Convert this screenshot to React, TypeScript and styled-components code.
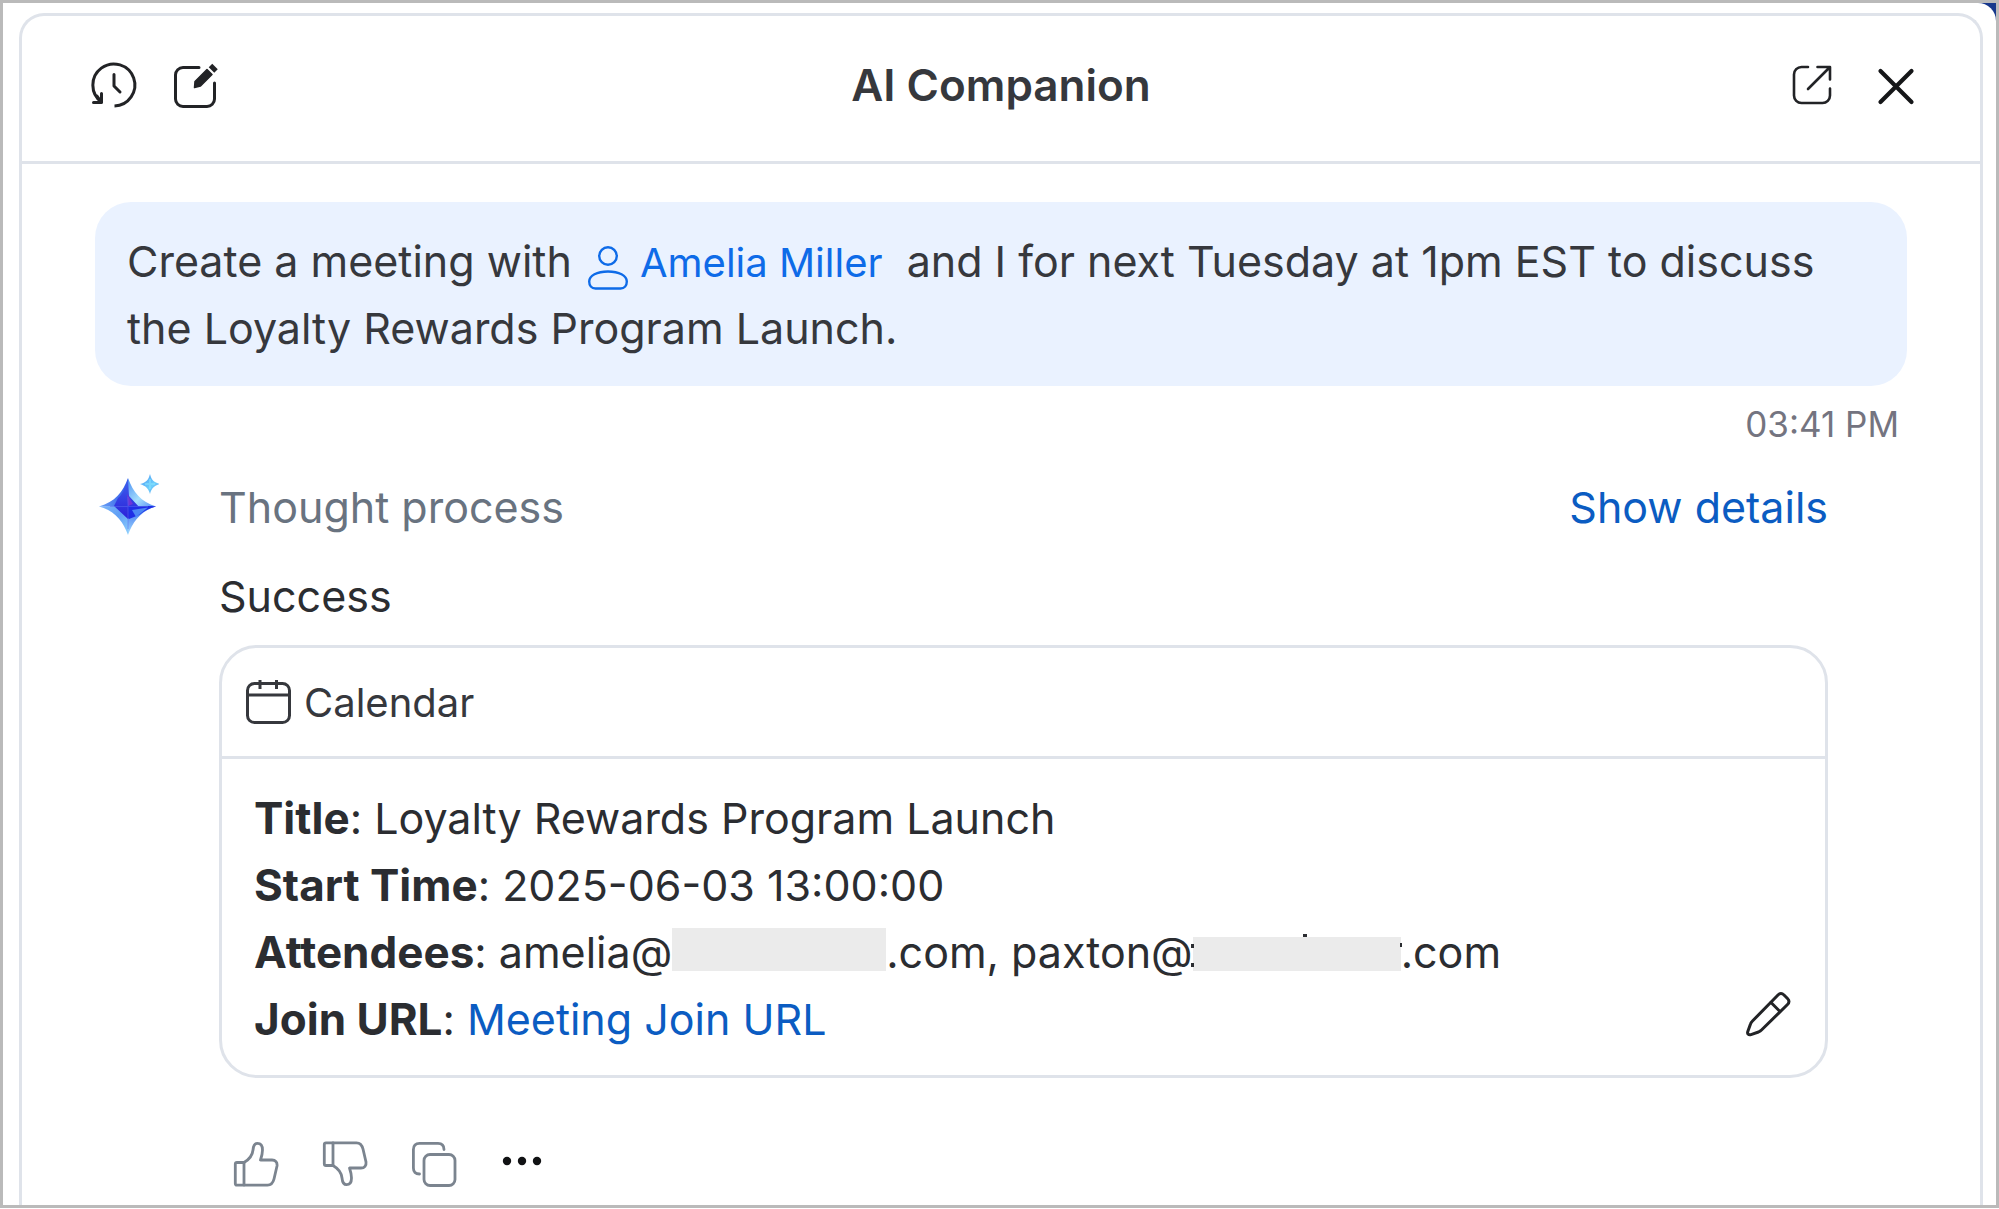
import React from "react";
import styled, { createGlobalStyle } from "styled-components";

const ink = "#2b2d31";
const line = "#dfe3ea";
const link = "#0b5cc2";

const GlobalStyle = createGlobalStyle`
  *, *::before, *::after { box-sizing: border-box; }
  body {
    margin: 0;
    background: #fff;
    font-family: Inter, "Liberation Sans", sans-serif;
    -webkit-font-smoothing: antialiased;
  }
`;

const Frame = styled.div`
  height: 100vh;
  padding-bottom: 1px;
  display: flex;
  overflow: hidden;
`;

const Backdrop = styled.div`
  flex: 1;
  display: flex;
  border: 3px solid #bababa;
  background: #17388c;
  overflow: hidden;
`;

const Surface = styled.div`
  flex: 1;
  display: flex;
  padding: 10px 13px 0 16px;
  border-top-right-radius: 18px;
  background: #fff;
`;

const Panel = styled.main`
  flex: 1;
  min-width: 0;
  border: 3px solid ${line};
  border-bottom: 0;
  border-radius: 25px 25px 0 0;
`;

const Header = styled.header`
  height: 148px;
  padding: 0 56px 7px;
  display: grid;
  grid-template-columns: 1fr auto 1fr;
  align-items: center;
  border-bottom: 3px solid ${line};
`;

const HeaderTools = styled.div<{ $end?: boolean }>`
  display: flex;
  gap: ${(p) => (p.$end ? 28 : 26)}px;
  padding-left: ${(p) => (p.$end ? 0 : 8)}px;
  justify-content: ${(p) => (p.$end ? "flex-end" : "flex-start")};
`;

const IconButton = styled.button<{ $width?: number; $color?: string }>`
  width: ${(p) => p.$width ?? 44}px;
  height: 44px;
  padding: 0;
  border: 0;
  display: flex;
  align-items: center;
  justify-content: center;
  background: none;
  color: ${(p) => p.$color ?? "#222326"};
  cursor: pointer;
`;

const Icon = styled.svg`
  display: block;
  width: 44px;
  height: 44px;
  flex: none;
  overflow: visible;
  fill: none;
  stroke: currentColor;
  stroke-width: 3;
  stroke-linecap: round;
  stroke-linejoin: round;
`;

const Title = styled.h1`
  margin: 0;
  font-size: 44px;
  line-height: 56px;
  font-weight: 600;
  color: #36383d;
`;

const Conversation = styled.section`
  padding: 38px 73px 0;
`;

const Bubble = styled.div`
  padding: 26px 32px 24px;
  border-radius: 36px;
  background: #eaf2ff;
  color: #36383d;
  font-size: 43px;
  line-height: 67px;
`;

const Mention = styled.a`
  margin-right: 12px;
  color: #0e6be8;
  font-size: 40px;
  line-height: 1;
  text-decoration: none;

  svg {
    display: inline-block;
    vertical-align: -13px;
    width: 40px;
    margin: 0 12px 0 4px;
  }
`;

const Time = styled.time`
  display: block;
  padding: 14px 8px 0;
  font-size: 35px;
  line-height: 48px;
  text-align: right;
  color: #747480;
`;

const Reply = styled.article`
  display: grid;
  grid-template-columns: 124px 1fr;
  padding: 26px 79px 0 0;
`;

const Spark = styled.svg`
  display: block;
  width: 64px;
  height: 64px;
`;

const ReplyBody = styled.div`
  min-width: 0;
  font-size: 43px;
  line-height: 67px;
  color: ${ink};
`;

const ThoughtRow = styled.div`
  display: flex;
  justify-content: space-between;
  color: #697380;
`;

const TextButton = styled.button`
  padding: 0;
  border: 0;
  background: none;
  font: inherit;
  color: ${link};
  cursor: pointer;
`;

const Status = styled.p`
  margin: 22px 0 15px;
`;

const Card = styled.section`
  border: 3px solid ${line};
  border-radius: 38px;
`;

const CardHeader = styled.h2`
  margin: 0;
  height: 111px;
  padding: 0 24px;
  display: flex;
  align-items: center;
  gap: 14px;
  border-bottom: 3px solid ${line};
  font-size: 40px;
  font-weight: 400;
  color: #36383d;
`;

const CardBody = styled.div`
  padding: 26px 35px 22px 32px;
  display: flex;
  align-items: flex-end;
  justify-content: space-between;
`;

const Details = styled.dl`
  margin: 0;
`;

const Detail = styled.div`
  display: flex;
  white-space: pre;
`;

const Term = styled.dt`
  strong {
    font-size: 44px;
    line-height: 1;
    font-weight: 700;
  }
`;

const Value = styled.dd`
  margin: 0;
  display: flex;
`;

const Redacted = styled.span<{ $width: number; $height: number }>`
  width: ${(p) => p.$width}px;
  height: ${(p) => p.$height}px;
  margin-top: ${(p) => 52 - p.$height}px;
  background: #ebebeb;

  svg {
    display: block;
    overflow: visible;
  }
`;

const Link = styled.a`
  color: ${link};
  text-decoration: none;
`;

const EditSlot = styled.div`
  padding-bottom: 17px;
`;

const Actions = styled.div`
  display: flex;
  gap: 45px;
  padding: 64px 15px 0;
`;

const HistoryIcon = () => (
  <Icon viewBox="0 0 44 44" aria-hidden="true">
    <path d="M22.5 43A21 21 0 1 0 9.5 39" strokeLinecap="butt" />
    <path d="M1.5 39.5H9.5V30.5M9.5 39.5L5 33" />
    <path d="M22 11.500V23L28 29" />
  </Icon>
);

const ComposeIcon = () => (
  <Icon viewBox="0 0 44 44" aria-hidden="true">
    <path d="M25 4.500H9A7.500 7.500 0 0 0 1.500 12V36A7.500 7.500 0 0 0 9 43.500H33A7.500 7.500 0 0 0 40.500 36V20" />
    <path d="M21 18.500L33 6.500L38 11.500L26.500 23L20.500 24.500Z" fill="currentColor" strokeWidth="1.500" />
    <path d="M36.500 2.500L42 8" strokeWidth="5" strokeLinecap="butt" />
  </Icon>
);

const PopOutIcon = () => (
  <Icon viewBox="0 0 44 44" aria-hidden="true">
    <g strokeWidth="2.600">
      <path d="M18 4H11.500A7.500 7.500 0 0 0 4 11.500V32.500A7.500 7.500 0 0 0 11.500 40H32.500A7.500 7.500 0 0 0 40 32.500V25.500" />
      <path d="M27.500 4H40V16.500M39.500 4.500L18 26" />
    </g>
  </Icon>
);

const CloseIcon = () => (
  <Icon viewBox="0 0 44 44" aria-hidden="true">
    <path d="M6.500 8L37.500 39M37.500 8L6.500 39" strokeWidth="4.200" stroke="#151618" />
  </Icon>
);

const PersonIcon = () => (
  <svg viewBox="0 0 40 44" height="44" fill="none" stroke="currentColor" strokeWidth="2.400" aria-hidden="true">
    <circle cx="20" cy="10" r="8.800" />
    <path d="M7.500 42.500C3.500 42.500 1.200 39.500 1.200 35.500C1.200 29.500 9 25.500 20 25.500S38.800 29.500 38.800 35.500C38.800 39.500 36.500 42.500 32.500 42.500Z" />
  </svg>
);

const CalendarIcon = () => (
  <Icon viewBox="0 0 44 44" aria-hidden="true">
    <rect x="1.500" y="3.500" width="42" height="39" rx="7" />
    <path d="M2 15H43M14 0V9M30.500 0V9" strokeLinecap="butt" />
  </Icon>
);

const PencilIcon = () => (
  <Icon viewBox="0 0 44 44" aria-hidden="true">
    <path d="M1.800 39.500L4.500 32C5 30.500 5.500 30 6.500 29L32 3C34 1 36 1 38 3L41.500 6.500C43.500 8.500 43.500 10.500 41.500 12.500L15.500 38C14.500 39 13.500 39.500 12.500 40L5 42.600C2.500 43.200 1 42 1.800 39.500Z" />
    <path d="M25 10.500L33.500 19" />
  </Icon>
);

const ThumbUpPaths = () => (
  <>
    <path d="M10 20.500C16 17 18.500 13 19 8C19.400 3.500 20.500 1.300 23.500 1.300C27 1.300 28.500 4 28.500 8C28.500 12 27.500 15 26.500 18H38C41.500 18 43.500 20.500 43 24L40 37C39 41 37.500 43.200 33.500 43.200H3C2 43.200 1.300 42.500 1.300 41.500V22C1.300 21 2 20.500 3 20.500Z" />
    <path d="M10 20.500V43" />
  </>
);

const ThumbUpIcon = () => (
  <Icon viewBox="0 0 44 44" aria-hidden="true">
    <g strokeWidth="2.800"><ThumbUpPaths /></g>
  </Icon>
);

const ThumbDownIcon = () => (
  <Icon viewBox="0 0 44 44" aria-hidden="true">
    <g strokeWidth="2.800" transform="translate(0 44) scale(1 -1)"><ThumbUpPaths /></g>
  </Icon>
);

const CopyIcon = () => (
  <Icon viewBox="0 0 44 44" aria-hidden="true">
    <g strokeWidth="2.800">
      <path d="M7.500 32C3.500 32 1.400 30 1.400 26V7.500C1.400 3.500 3.500 1.400 7.500 1.400H26C30 1.400 32 3.500 32 7.500" />
      <rect x="12" y="12.500" width="31" height="31" rx="6" />
    </g>
  </Icon>
);

const MoreIcon = () => (
  <Icon viewBox="0 0 44 44" aria-hidden="true">
    <g fill="#111214" stroke="none">
      <circle cx="6" cy="19" r="4.200" />
      <circle cx="21" cy="19" r="4.200" />
      <circle cx="36" cy="19" r="4.200" />
    </g>
  </Icon>
);

const SparkIcon = () => (
  <Spark viewBox="0 0 64 64" role="img" aria-label="AI Companion">
    <defs>
      <linearGradient id="west" x1="0" y1="0" x2="1" y2="0">
        <stop offset="0" stopColor="#6fa8f6" />
        <stop offset="1" stopColor="#2f55e8" />
      </linearGradient>
      <linearGradient id="west-light" x1="0" y1="0" x2="1" y2="1">
        <stop offset="0" stopColor="#7fb8fa" />
        <stop offset=".5" stopColor="#5f9ff5" />
        <stop offset="1" stopColor="#8fd0fd" />
      </linearGradient>
      <linearGradient id="north" x1="0" y1="0" x2="0" y2="1">
        <stop offset="0" stopColor="#3f62ee" />
        <stop offset="1" stopColor="#2a1fd8" />
      </linearGradient>
      <linearGradient id="east" x1="0" y1="0" x2="1" y2="1">
        <stop offset="0" stopColor="#4a8ff3" />
        <stop offset=".55" stopColor="#a4defd" />
        <stop offset="1" stopColor="#4f86f3" />
      </linearGradient>
      <linearGradient id="south" x1="0" y1="0" x2="0" y2="1">
        <stop offset="0" stopColor="#3566ee" />
        <stop offset="1" stopColor="#a5e0ff" />
      </linearGradient>
      <linearGradient id="small" x1="0" y1="0" x2="1" y2="1">
        <stop offset="0" stopColor="#4a93f3" />
        <stop offset=".6" stopColor="#6fd0fb" />
        <stop offset="1" stopColor="#4b86ee" />
      </linearGradient>
    </defs>
    <path d="M33 4C28 18 20 28 4 32.500L33 33Z" fill="url(#west)" />
    <path d="M33 4C38 18 46 28 61 32.500L33 33Z" fill="url(#east)" />
    <path d="M4 32.500C20 37 28 47 33 61V32Z" fill="url(#west-light)" />
    <path d="M61 32.500C46 37 38 47 33 61V32Z" fill="url(#south)" />
    <path d="M33 5C30 15 27 21 23 24L19 32L33 45L45 34L34 22Z" fill="url(#north)" />
    <path d="M61 32.500C51 31 43 33 33 32L34 45L44 41C49 37 54 34 61 32.500Z" fill="#1f2ee6" />
    <path d="M37 36L53 33.500L41 43Z" fill="#4c86f5" />
    <path d="M32 20L38 30L33 32Z" fill="#6d35d6" />
    <path d="M33 23V55M15 32.500H53" stroke="#5a6cf2" strokeWidth="1" opacity=".5" />
    <path d="M55 0C56.500 6 59 8.500 65 10C59 12 56.500 14.500 55 20C53.500 14.500 51 12 45 10C51 8.500 53.500 6 55 0Z" fill="url(#small)" />
    <path d="M55 5V15M50 10H60" stroke="#8ce8ff" strokeWidth="2" opacity=".5" />
  </Spark>
);

export default function App() {
  return (
    <>
      <GlobalStyle />
      <Frame>
        <Backdrop>
          <Surface>
            <Panel>
              <Header>
                <HeaderTools>
                  <IconButton $width={56} aria-label="History"><HistoryIcon /></IconButton>
                  <IconButton $width={56} aria-label="New chat"><ComposeIcon /></IconButton>
                </HeaderTools>
                <Title>AI Companion</Title>
                <HeaderTools $end>
                  <IconButton $width={56} aria-label="Pop out"><PopOutIcon /></IconButton>
                  <IconButton $width={56} aria-label="Close"><CloseIcon /></IconButton>
                </HeaderTools>
              </Header>
              <Conversation>
                <Bubble>
                  <span>Create a meeting with </span>
                  <Mention href="#amelia"><PersonIcon />Amelia Miller</Mention>
                  <span> and I for next Tuesday at 1pm EST to discuss the Loyalty Rewards Program Launch.</span>
                </Bubble>
                <Time dateTime="15:41">03:41 PM</Time>
                <Reply>
                  <SparkIcon />
                  <ReplyBody>
                    <ThoughtRow>
                      <span>Thought process</span>
                      <TextButton>Show details</TextButton>
                    </ThoughtRow>
                    <Status>Success</Status>
                    <Card>
                      <CardHeader><CalendarIcon />Calendar</CardHeader>
                      <CardBody>
                        <Details>
                          <Detail>
                            <Term><strong>Title</strong>: </Term>
                            <Value>Loyalty Rewards Program Launch</Value>
                          </Detail>
                          <Detail>
                            <Term><strong>Start Time</strong>: </Term>
                            <Value>2025-06-03 13:00:00</Value>
                          </Detail>
                          <Detail>
                            <Term><strong>Attendees</strong>: </Term>
                            <Value>
                              amelia@<Redacted $width={214} $height={43} />.com, paxton@
                              <Redacted $width={208} $height={34}>
                                <svg width="208" height="34" aria-hidden="true">
                                  <path d="M-2 7H1V11H-2ZM-2 26H1V30H-2ZM110 -3H114V0H110ZM207 6H209V10H207Z" fill={ink} />
                                </svg>
                              </Redacted>.com
                            </Value>
                          </Detail>
                          <Detail>
                            <Term><strong>Join URL</strong>: </Term>
                            <Value><Link href="#join">Meeting Join URL</Link></Value>
                          </Detail>
                        </Details>
                        <EditSlot>
                          <IconButton aria-label="Edit event"><PencilIcon /></IconButton>
                        </EditSlot>
                      </CardBody>
                    </Card>
                    <Actions>
                      <IconButton $color="#7b848f" aria-label="Good response"><ThumbUpIcon /></IconButton>
                      <IconButton $color="#7b848f" aria-label="Bad response"><ThumbDownIcon /></IconButton>
                      <IconButton $color="#7b848f" aria-label="Copy"><CopyIcon /></IconButton>
                      <IconButton aria-label="More"><MoreIcon /></IconButton>
                    </Actions>
                  </ReplyBody>
                </Reply>
              </Conversation>
            </Panel>
          </Surface>
        </Backdrop>
      </Frame>
    </>
  );
}
